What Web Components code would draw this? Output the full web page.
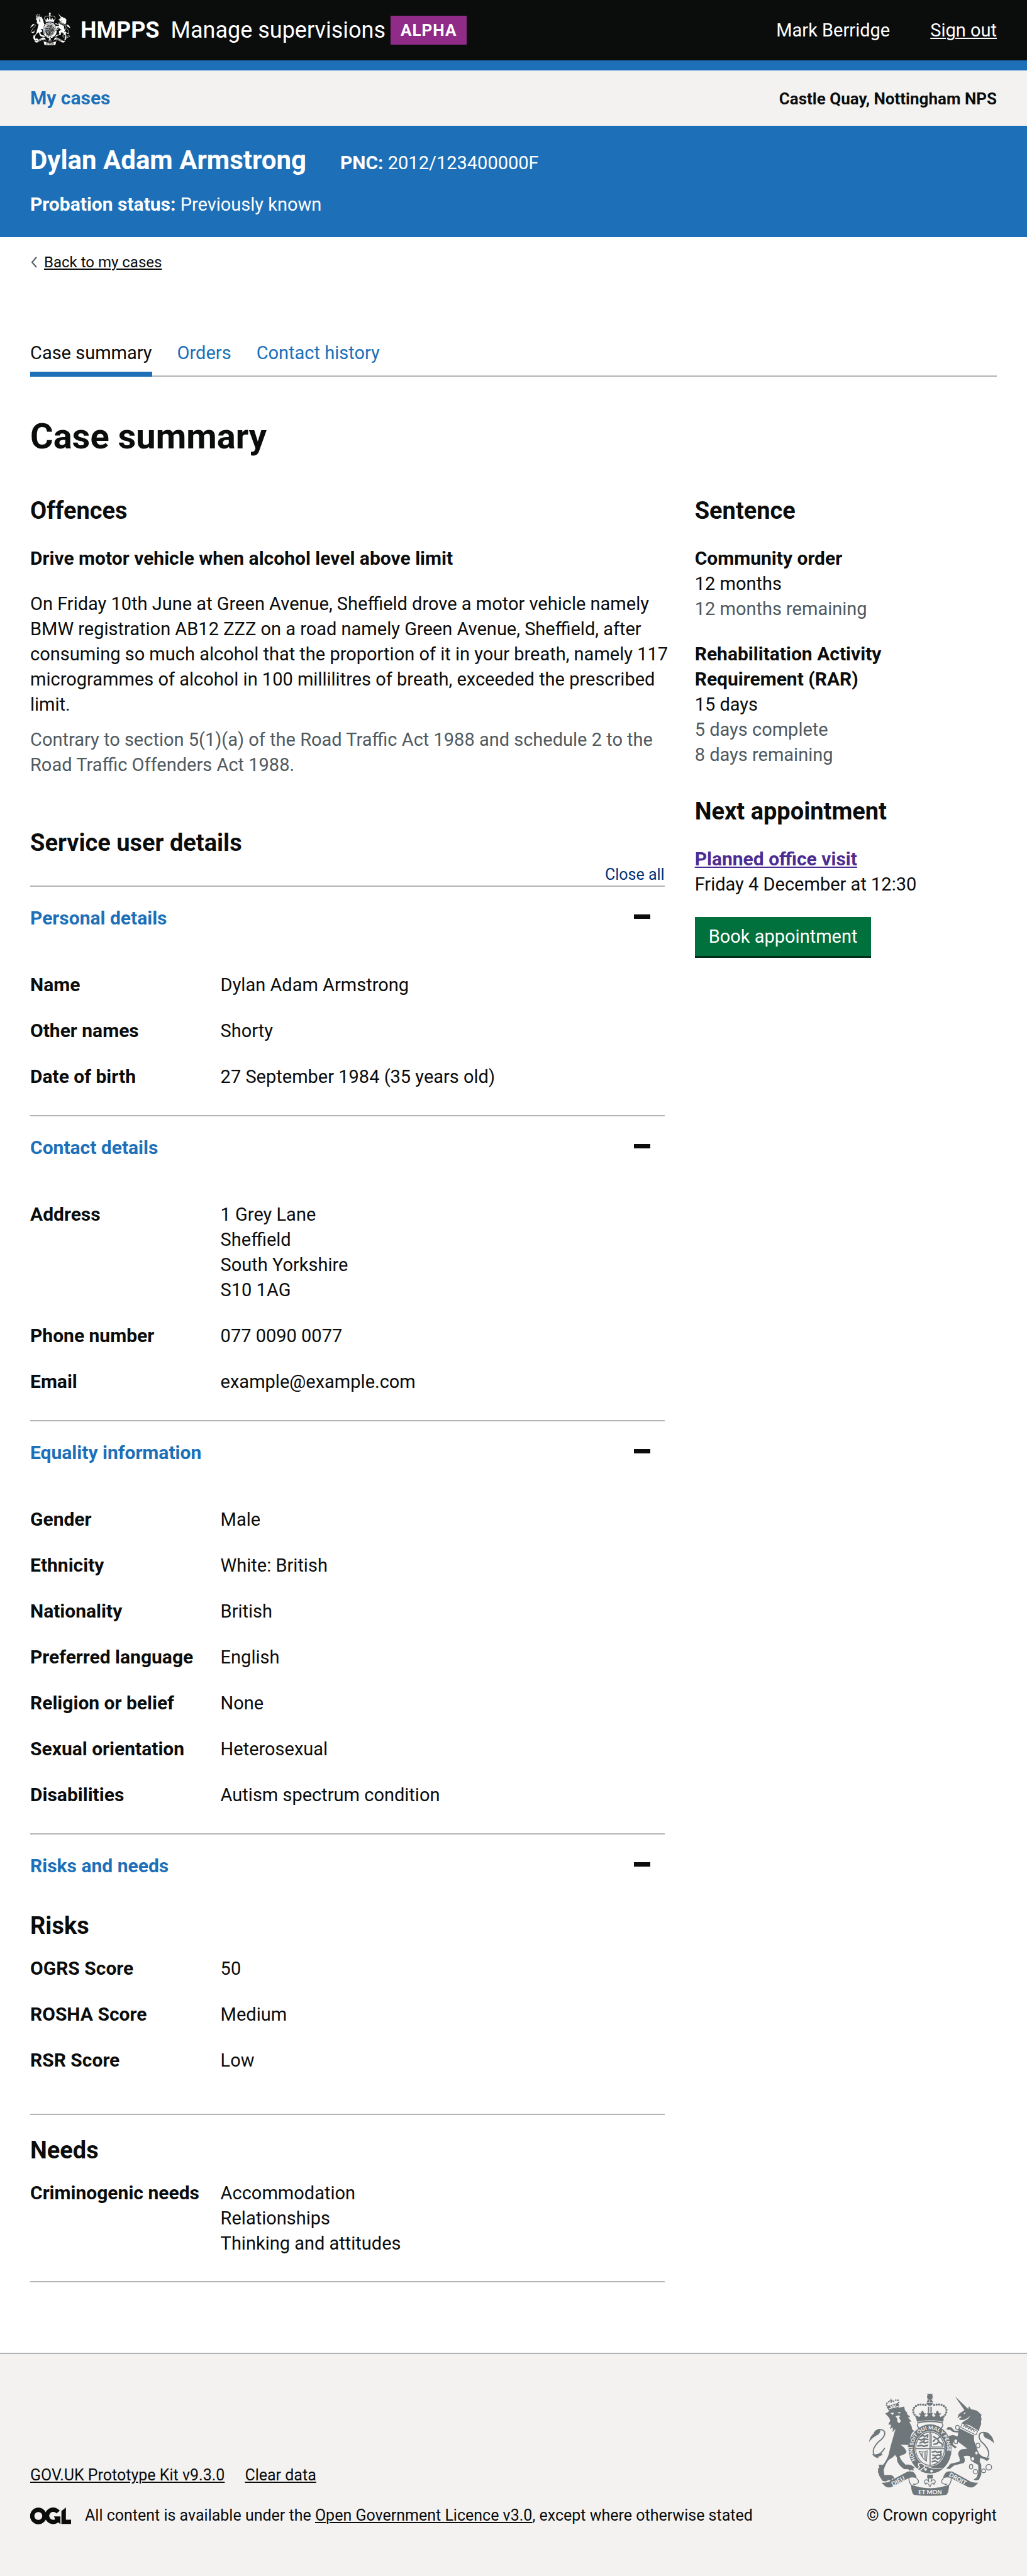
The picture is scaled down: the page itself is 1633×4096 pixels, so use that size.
<!DOCTYPE html>
<html lang="en">
<head>
<meta charset="utf-8">
<meta name="viewport" content="width=device-width, initial-scale=1">
<title>Case summary - Manage supervisions</title>
<style>
  :root {
    --ink: #0b0c0c; --blue: #1d70b8; --pale: #f3f2f1; --line: #b1b4b6; --muted: #505a5f;
    --gutter: 48px;
  }
  body { margin: 0; background: #fff; color: var(--ink); font: 400 29px/40px Roboto, "Liberation Sans", sans-serif; }
  h1, h2, h3, p { margin: 0; }
  main { padding: 0 var(--gutter); }
  h1 { margin-top: 63px; font-size: 56px; line-height: 64px; font-weight: 700; }
  h2 { font-size: 38px; line-height: 48px; font-weight: 700; }
  h3 { margin-top: 32px; font-size: 30px; line-height: 40px; font-weight: 700; }
  aside { padding-right: 16px; }
  .muted { color: var(--muted); }
  .offence { margin: 32px -8px 0 0; }
  .offence + .muted { margin-top: 16px; }
  .details { margin-top: 80px; }
  .next { margin-top: 46px; }
  .visit { color: #4c2c92; text-decoration-thickness: 2px; text-underline-offset: 2px; }
</style>
</head>
<body>
<app-header>
  <span slot="org">HMPPS</span>
  <span slot="service">Manage supervisions</span>
  <span slot="phase">ALPHA</span>
  <span slot="user">Mark Berridge</span>
</app-header>
<primary-nav>My cases<span slot="team">Castle Quay, Nottingham NPS</span></primary-nav>
<case-banner>
  <span slot="name">Dylan Adam Armstrong</span>
  <span slot="pnc">2012/123400000F</span>
  <span slot="status">Previously known</span>
</case-banner>
<main>
  <back-link>Back to my cases</back-link>
  <tab-nav></tab-nav>
  <h1>Case summary</h1>
  <two-thirds>
    <section>
      <h2>Offences</h2>
      <h3>Drive motor vehicle when alcohol level above limit</h3>
      <p class="offence">On Friday 10th June at Green Avenue, Sheffield drove a motor vehicle namely BMW registration AB12 ZZZ on a road namely Green Avenue, Sheffield, after consuming so much alcohol that the proportion of it in your breath, namely 117 microgrammes of alcohol in 100 millilitres of breath, exceeded the prescribed limit.</p>
      <p class="muted">Contrary to section 5(1)(a) of the Road Traffic Act 1988 and schedule 2 to the Road Traffic Offenders Act 1988.</p>
      <h2 class="details">Service user details</h2>
      <detail-accordion>
        <accordion-section heading="Personal details">
          <summary-group>
            <summary-row label="Name">Dylan Adam Armstrong</summary-row>
            <summary-row label="Other names">Shorty</summary-row>
            <summary-row label="Date of birth">27 September 1984 (35 years old)</summary-row>
          </summary-group>
        </accordion-section>
        <accordion-section heading="Contact details">
          <summary-group>
            <summary-row label="Address">1 Grey Lane<br>Sheffield<br>South Yorkshire<br>S10 1AG</summary-row>
            <summary-row label="Phone number">077 0090 0077</summary-row>
            <summary-row label="Email">example@example.com</summary-row>
          </summary-group>
        </accordion-section>
        <accordion-section heading="Equality information">
          <summary-group>
            <summary-row label="Gender">Male</summary-row>
            <summary-row label="Ethnicity">White: British</summary-row>
            <summary-row label="Nationality">British</summary-row>
            <summary-row label="Preferred language">English</summary-row>
            <summary-row label="Religion or belief">None</summary-row>
            <summary-row label="Sexual orientation">Heterosexual</summary-row>
            <summary-row label="Disabilities">Autism spectrum condition</summary-row>
          </summary-group>
        </accordion-section>
        <accordion-section heading="Risks and needs">
          <summary-group heading="Risks" class="risks">
            <summary-row label="OGRS Score">50</summary-row>
            <summary-row label="ROSHA Score">Medium</summary-row>
            <summary-row label="RSR Score">Low</summary-row>
          </summary-group>
          <summary-group heading="Needs" class="needs">
            <summary-row label="Criminogenic needs">Accommodation<br>Relationships<br>Thinking and attitudes</summary-row>
          </summary-group>
        </accordion-section>
      </detail-accordion>
    </section>
    <aside slot="side">
      <h2>Sentence</h2>
      <h3>Community order</h3>
      <p>12 months</p>
      <p class="muted">12 months remaining</p>
      <h3>Rehabilitation Activity Requirement (RAR)</h3>
      <p>15 days</p>
      <p class="muted">5 days complete</p>
      <p class="muted">8 days remaining</p>
      <h2 class="next">Next appointment</h2>
      <h3><a class="visit" href="#visit">Planned office visit</a></h3>
      <p>Friday 4 December at 12:30</p>
      <action-button>Book appointment</action-button>
    </aside>
  </two-thirds>
</main>
<page-footer></page-footer>

<script>
const define = (name, html, setup) => {
  const template = document.createElement('template');
  template.innerHTML = html;
  customElements.define(name, class extends HTMLElement {
    connectedCallback() {
      if (this.shadowRoot) return;
      const root = this.attachShadow({ mode: 'open' });
      root.append(template.content.cloneNode(true));
      if (setup) setup(this, root);
    }
  });
};

/* Royal coat of arms: currentColor for the figures, --paper for what is cut out of them */
define('royal-arms', `
<style>
  :host { display: block; }
  svg { display: block; width: 100%; height: auto; }
  .ink { fill: currentColor; }
  .cut { fill: var(--paper); }
  .pen { fill: none; stroke: currentColor; stroke-linecap: round; stroke-linejoin: round; }
  .pen .cut { fill: var(--paper); }
  .nib { fill: none; stroke: var(--paper); stroke-linecap: round; }
  text { fill: var(--paper); font: 900 36px Lato, sans-serif; }
  .motto { font-size: 31px; }
</style>
<svg viewBox="94 94 754 616" role="img" aria-label="Royal coat of arms">
  <!-- supporters' tails -->
  <path class="pen" stroke-width="7" d="M128 462q-12-24 2-48 16-28 42-46 26-26 18-46-10-16-38-12"/>
  <path class="pen" stroke-width="7" d="M140 466q30-10 50-44"/>
  <path class="ink" d="M96 386q6-36 28-52 8-26 38-28 10 14-10 34-34 14-56 46z"/>
  <path class="ink" d="M112 456q26 8 54-8l14 12-28 14 2 8-22-8z"/>
  <path class="pen" stroke-width="7" d="M808 474q14-20-2-50-14-26-36-42-20-26-10-46 10-14 36-8"/>
  <path class="ink" d="M846 394q-2-36-24-54-10-16-38-16-6 20 10 36 36 10 52 34z"/>
  <path class="ink" d="M756 452q20 28 66 26l-10 14-8 6-18-12-34-8z"/>
  <!-- lion -->
  <path class="ink" d="M194 213l16-7 12-15 48-11 38-9 4 22 16 18-6 2 23 22-15 1 22 26-14 1 14 26 4 20 12 8-14 14-10 30 12 22 16 20 3 24 9 18-12 13-10-12-6 8-8-18-14-4 12-12-20-10 10-8-50-2q30 20 36 44-4 14-42 24 4 20 26 42l10 10q36-4 56 20l-10 2 3 14-16-5-10 6-6-10-26-1q-28-18-40-44l-4-26-10-14q-10 14-36 28-20 20-32 62l4 30 38-1q22 6 22 26l-14-4-3 16-17-8-18 10-20-4q-20-28-27-55l2-10-3-8 10-4-4-19 27-1q26-34 34-66 6-30 16-64l24-86-18 22 2-30-18 12 8-26-18-3 12-22-6-18z"/>
  <path class="cut" d="M224 210l22-2-6 14zM266 208l22-4-8 10zM256 230l20-6 8 6-8 6 12 22-8 12-12-4-2-22z"/>
  <path class="ink" d="M212 192l-6-24 66-18 2 30-58 14z"/>
  <path class="nib" stroke-width="5" d="M218 184l50-12M224 168l8 8 8-14 8 12 10-14"/>
  <path class="pen" stroke-width="10" stroke-dasharray="0 14" d="M208 178q-10-20-4-26 12-14 26-8M244 140q20-12 26-6 8 6 2 28"/>
  <path class="pen" stroke-width="5" d="M228 126l4 18M221 137l16-4"/>
  <!-- unicorn -->
  <path class="ink" d="M612 110l80 76-20 12zM626 240l10-24 32-22 24-8 4-18 13 20q38 2 56 28l7 4-4 10 4 18-4 14 2 14-6 14-4 10-4 18-54-34-48-12 6-8 32-20 12-18q-14 16-36 24l-20 2-14-6 20-12-12-4-14 10z"/>
  <path class="cut" d="M662 212l16-6-8 10z"/>
  <path class="ink" d="M636 300l92 46q-6 26 6 50l16 44q18 30 10 60l10 20v60l-14 30-18 4-14-4 18-14 10-30v-44l-38-22-14-32q-20-4-36 2 14 24 2 40l-58 14-28 22-20-2 26-30 52-12q8-14-6-40-4-24 20-34l34-4-56-42-2 14-28-12v14l24 16-12 8-22-18q-20-14-20-40l6-16 24-6 28 8 4-22-32-4-16-12-24-2 10-16 20 2 20 20h22z"/>
  <path class="pen cut" stroke-width="4" d="M656 270l92 50-10 22-92-46z"/>
  <path class="pen" stroke-width="5" d="M664 292l6-12 8 18 8-12 8 20 10-12 6 20 10-10 8 18"/>
  <g class="pen" stroke-width="5">
    <ellipse class="cut" cx="627" cy="297" rx="11" ry="13"/><ellipse class="cut" cx="617" cy="380" rx="11" ry="14"/>
    <ellipse class="cut" cx="750" cy="405" rx="12" ry="14"/><ellipse class="cut" cx="741" cy="450" rx="10" ry="11"/>
    <ellipse class="cut" cx="719" cy="485" rx="11" ry="13"/><ellipse cx="709" cy="532" rx="10" ry="14"/>
    <ellipse cx="735" cy="562" rx="14" ry="13"/><ellipse cx="784" cy="557" rx="13" ry="11"/><circle cx="815" cy="535" r="17"/>
  </g>
  <!-- crown -->
  <path class="ink" d="M445 96h34l-6 12 6-3v16l-6-4 6 12h-34l6-12-6 4v-16l6 3zM443 146q2-16 18-18 16 2 20 18zM441 150h40q-2 14-20 18-18-4-20-18z"/>
  <path class="cut" d="M459 130h4v16h-4z"/>
  <path class="pen" stroke-width="13" stroke-dasharray="0 15" d="M380 232q-30-30-12-54 20-28 74-14M544 232q28-30 12-54-20-28-74-14"/>
  <path class="ink" d="M450 172h8v36h-8zM465 172h8v36h-8zM380 244q82-22 166 0l-8 30q-76-18-150 0z"/>
  <path class="ink" d="M376 222l22 12 8-10-12-8q4-8 12-2 4-14 12-18 6 4 10 18 10-6 12 2l-12 8 10 10 12-10-6-14h36l-6 14 12 10 10-10-12-8q4-8 12-2 4-14 10-18 8 4 12 18 8-6 12 2l-12 8 8 10 22-12-6 24q-80-22-162 0z"/>
  <path class="nib" stroke-width="3" d="M386 264q76-18 154 0"/>
  <path class="pen" stroke-width="6" d="M388 276q-6 14 8 22M538 276q6 14-8 22"/>
  <!-- garter -->
  <ellipse class="ink" cx="463" cy="426" rx="129" ry="148"/>
  <ellipse class="cut" cx="463" cy="424" rx="92" ry="106"/>
  <path id="garter" fill="none" d="M388 510A103 119 0 1 1 538 510"/>
  <text class="motto"><textPath href="#garter" startOffset="20">HONI SOIT QUI MAL Y PENSE</textPath></text>
  <ellipse class="pen" cx="463" cy="424" rx="86" ry="100" stroke-width="5"/>
  <path class="pen" stroke-width="6" d="M463 326v196M377 424h172"/>
  <g class="pen" stroke-width="9">
    <path d="M404 352l16-8 10 8 20-10M394 368l18 4 14-8 24 6M402 390l18-8 12 8 18-6M390 408l22-4 14 6 22-6M448 342v14M428 372l-4 14"/>
    <path d="M476 444l18-4 12 6 24-6M480 462l14 6 20-8 16 8M478 484l18-6 12 8 18-8M476 502l16-4 14 6M526 446l4 14"/>
    <path d="M484 352l22 14 10 14-12 14-18 4M506 366l18-14M512 384l20 8 6 14M492 370l-10 10"/>
  </g>
  <path class="pen" stroke-width="4" d="M472 334v80h66M396 438q20 12 50-2l-4 64q-26-16-46-62zM408 446l6 24M418 446v34M428 444v42M437 442v50"/>
  <path class="nib" stroke-width="4" d="M424 522q60 30 112 18"/>
  <path class="nib" stroke-width="6" d="M396 512q-6 14 4 20-6 12-14 16 14 12 26 0 8-12 18-10 4-16-8-20-8-8-26-6z"/>
  <circle class="cut" cx="436" cy="549" r="8"/><circle class="cut" cx="472" cy="559" r="8"/>
  <!-- fleur-de-lis -->
  <path class="ink" d="M446 580h34v22h-34z"/>
  <path class="pen" stroke-width="5" d="M462 590q-14 18-6 34-6-18-22-12-10 10 4 26 2-12 10-6 10 6 10 14 4 10 8 0 0-8 10-14 8-6 10 6 14-16 4-26-16-6-22 12 8-16-6-34z"/>
  <!-- motto scroll -->
  <path class="ink" d="M172 628q36 2 62-16l92-50q50-14 58 42-20-14-52-2l-96 50q-26 12-44-4zM752 628q-36 2-62-16l-92-50q-50-14-58 42 20-14 52-2l96 50q26 12 44-4zM348 640q114 42 230 0-4 54-18 61-98 12-194 0-14-8-18-61z"/>
  <path class="pen" stroke-width="5" d="M336 600q-2 34 30 56M384 604q14 12 8 24-12 14-30 8M590 600q2 34-30 56M542 604q-14 12-8 24 12 14 30 8"/>
  <text transform="translate(240 650) rotate(-29)">DIEU</text>
  <text x="463" y="698" text-anchor="middle">ET MON</text>
  <text transform="translate(574 588) rotate(29)">DROIT</text>
</svg>`);

define('app-header', `
<style>
  :host { display: block; background: var(--ink); border-bottom: 16px solid var(--blue); color: #fff; }
  header { display: flex; align-items: center; justify-content: space-between; height: 96px; padding: 0 var(--gutter); }
  .brand, .account { display: flex; align-items: center; }
  .brand { font-size: 36px; line-height: 48px; }
  royal-arms { --paper: var(--ink); width: 64px; margin: 0 16px 4px 0; }
  .org { font-weight: 700; margin-right: 18px; }
  .phase { margin-left: 8px; padding: 3px 16px; background: #912b88; font-size: 26px; line-height: 40px; font-weight: 700; letter-spacing: 1px; }
  .account { gap: 64px; }
  a { color: #fff; text-decoration-thickness: 2px; text-underline-offset: 2px; }
</style>
<header>
  <div class="brand">
    <royal-arms></royal-arms>
    <span class="org"><slot name="org"></slot></span>
    <slot name="service"></slot>
    <strong class="phase"><slot name="phase"></slot></strong>
  </div>
  <div class="account"><slot name="user"></slot><a href="#sign-out">Sign out</a></div>
</header>`);

define('primary-nav', `
<style>
  :host { display: block; background: var(--pale); }
  nav { display: flex; align-items: baseline; justify-content: space-between; padding: 24px var(--gutter) 23px; font-weight: 700; }
  a { color: var(--blue); font-size: 30px; text-decoration: none; }
  .team { font-size: 26px; }
</style>
<nav aria-label="Primary"><a href="#cases"><slot></slot></a><span class="team"><slot name="team"></slot></span></nav>`);

define('case-banner', `
<style>
  :host { display: block; background: var(--blue); color: #fff; padding: 30px var(--gutter) 32px; }
  .top { display: flex; align-items: baseline; gap: 54px; }
  .name { font-size: 42px; line-height: 50px; font-weight: 700; }
  .status { margin-top: 25px; }
  b { font-size: 30px; }
</style>
<div class="top"><strong class="name"><slot name="name"></slot></strong><span><b>PNC:</b> <slot name="pnc"></slot></span></div>
<div class="status"><b>Probation status:</b> <slot name="status"></slot></div>`);

define('back-link', `
<style>
  :host { display: block; margin-top: 25px; font-size: 24px; line-height: 30px; }
  a { display: inline-flex; align-items: center; gap: 10px; color: var(--ink); text-decoration-thickness: 2px; text-underline-offset: 2px; }
  svg { width: 12px; height: 18px; fill: none; stroke: var(--muted); stroke-width: 2; }
</style>
<a href="#cases"><svg viewBox="0 0 12 18" aria-hidden="true"><path d="M10 1 3 9l7 8"/></svg><slot></slot></a>`);

define('tab-nav', `
<style>
  :host { display: block; margin-top: 108px; }
  nav { display: flex; gap: 40px; box-shadow: inset 0 -2px var(--line); }
  a { padding-bottom: 10px; border-bottom: 8px solid transparent; color: var(--blue); text-decoration: none; }
  a[aria-current] { color: var(--ink); border-color: var(--blue); }
</style>
<nav aria-label="Case"><a href="#summary" aria-current="page">Case summary</a><a href="#orders">Orders</a><a href="#contacts">Contact history</a></nav>`);

define('two-thirds', `
<style>
  :host { display: grid; grid-template-columns: calc((100% + var(--gutter)) * 2 / 3 - var(--gutter)) 1fr; column-gap: var(--gutter); margin-top: 62px; }
</style>
<slot></slot><slot name="side"></slot>`);

define('detail-accordion', `
<style>
  :host { display: block; margin-top: 12px; border-bottom: 2px solid var(--line); }
  .controls { display: flex; justify-content: flex-end; }
  button { padding: 0 0 2px; border: 0; background: none; color: #003078; font: 25px/30px Roboto, "Liberation Sans", sans-serif; }
</style>
<div class="controls"><button type="button">Close all</button></div>
<slot></slot>`);

define('accordion-section', `
<style>
  :host { display: block; border-top: 2px solid var(--line); }
  h3 { margin: 0; }
  button { display: flex; align-items: center; justify-content: space-between; width: 100%; padding: 30px 23px 0 0; border: 0; background: none; color: var(--blue); font: 700 30px/40px Roboto, "Liberation Sans", sans-serif; text-align: left; }
  svg { width: 26px; height: 12px; }
</style>
<h3><button type="button" aria-expanded="true"><span></span><svg viewBox="0 0 26 12" aria-hidden="true"><path fill="#0b0c0c" d="M0 0h26v7H0z"/></svg></button></h3>
<slot></slot>`, (host, root) => { root.querySelector('span').textContent = host.getAttribute('heading'); });

define('summary-group', `
<style>
  :host { display: block; padding: 66px 0 41px; }
  :host(.risks) { padding: 51px 0 65px; }
  :host(.needs) { padding: 32px 0 40px; border-top: 2px solid var(--line); }
  h4 { margin: 0 0 24px; font-size: 38px; line-height: 48px; }
  h4:empty { display: none; }
  .rows { display: flex; flex-direction: column; gap: 33px; }
</style>
<h4></h4><div class="rows"><slot></slot></div>`, (host, root) => { root.querySelector('h4').textContent = host.getAttribute('heading') || ''; });

define('summary-row', `
<style>
  :host { display: block; }
  dl { display: grid; grid-template-columns: 30% 1fr; margin: 0; }
  dt { font-size: 30px; font-weight: 700; }
  dd { margin: 0; }
</style>
<dl><dt></dt><dd><slot></slot></dd></dl>`, (host, root) => { root.querySelector('dt').textContent = host.getAttribute('label'); });

define('action-button', `
<style>
  :host { display: block; margin-top: 32px; }
  button { padding: 11px 22px; border: 0; background: #00703c; box-shadow: 0 3px 0 #002d18; color: #fff; font: 29px/40px Roboto, "Liberation Sans", sans-serif; }
</style>
<button type="button"><slot></slot></button>`);

define('page-footer', `
<style>
  :host { display: block; margin-top: 112px; border-top: 2px solid var(--line); background: var(--pale); font-size: 25px; line-height: 30px; }
  footer { display: flex; align-items: flex-end; justify-content: space-between; padding: 63px var(--gutter) 82px; }
  a { color: var(--ink); text-decoration-thickness: 2px; text-underline-offset: 2px; }
  .links { display: flex; gap: 32px; margin-bottom: 34px; }
  .licence { display: flex; align-items: center; gap: 22px; }
  .ogl { width: 65px; height: 27px; }
  .crown { display: flex; flex-direction: column; align-items: center; gap: 16px; }
  royal-arms { --paper: var(--pale); width: 200px; color: #6f777b; }
</style>
<footer>
  <div>
    <div class="links"><a href="#kit">GOV.UK Prototype Kit v9.3.0</a><a href="#clear">Clear data</a></div>
    <div class="licence">
      <svg class="ogl" viewBox="60 48 246 102" role="img" aria-label="OGL">
        <g fill="none" stroke="#0b0c0c" stroke-width="26"><circle cx="109" cy="99" r="37"/><path d="M228 76a37 37 0 1 0-4 49"/></g>
        <path fill="#0b0c0c" d="M203 102h39v47l-16-14-14-12zM248 70l27-22v74h31v25h-58z"/>
      </svg>
      <span>All content is available under the <a href="#ogl">Open Government Licence v3.0</a>, except where otherwise stated</span>
    </div>
  </div>
  <div class="crown"><royal-arms></royal-arms><span>© Crown copyright</span></div>
</footer>`);
</script>
</body>
</html>
